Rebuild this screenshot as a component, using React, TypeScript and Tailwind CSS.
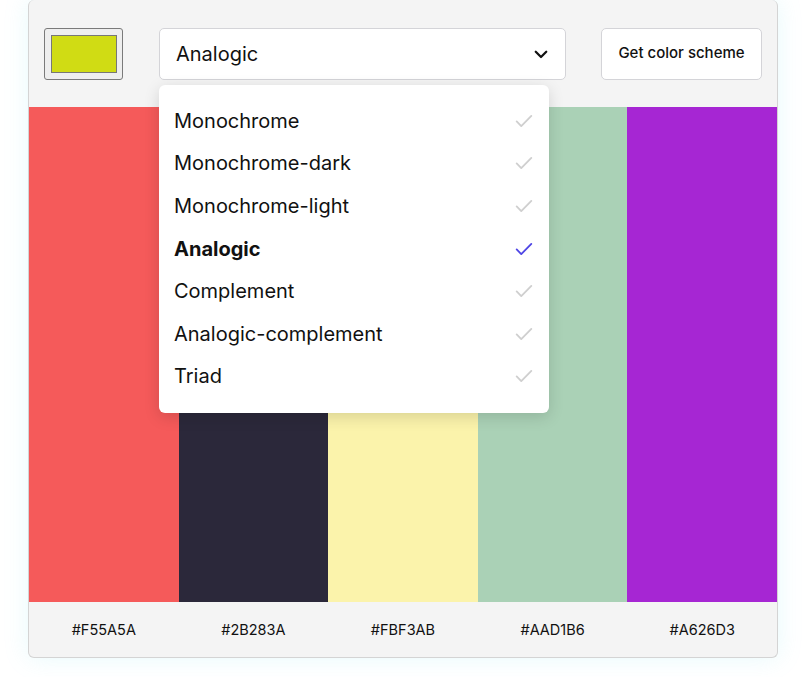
import React from "react";

const schemes = [
  "Monochrome",
  "Monochrome-dark",
  "Monochrome-light",
  "Analogic",
  "Complement",
  "Analogic-complement",
  "Triad",
];

const colors = [
  { hex: "#F55A5A", cls: "bg-[#F55A5A]" },
  { hex: "#2B283A", cls: "bg-[#2B283A]" },
  { hex: "#FBF3AB", cls: "bg-[#FBF3AB]" },
  { hex: "#AAD1B6", cls: "bg-[#AAD1B6]" },
  { hex: "#A626D3", cls: "bg-[#A626D3]" },
];

function Check({ active }: { active: boolean }) {
  return (
    <svg width="22" height="22" viewBox="0 0 24 24" fill="none" stroke={active ? "#4f46e5" : "#cfcfcf"} strokeWidth="2" strokeLinecap="round" strokeLinejoin="round">
      <path d="M4 12.5l5 5L20 6.5" />
    </svg>
  );
}

export default function App() {
  return (
    <div className="min-h-[677px] bg-white" style={{ fontFamily: "Inter, 'Noto Sans', sans-serif" }}>
      <div className="ml-[28px] w-[750px] h-[658px] rounded-md border border-[#d4d4d4] border-t-0 bg-[#f4f4f4] shadow-[0_0_24px_rgba(120,230,240,0.18)] flex flex-col relative">
        <div className="h-[107px] flex items-center pl-[15px] pr-[15px] shrink-0">
          <div className="w-[79px] h-[52px] border border-[#7a7a7a] rounded-[3px] bg-[#eeeeee] flex items-center justify-center">
            <div className="w-[66px] h-[38px] bg-[#d0dc14] border border-[#777]"></div>
          </div>
          <div className="relative ml-[36px]">
            <div className="w-[407px] h-[52px] bg-white border border-[#d4d4d8] rounded-[5px] flex items-center justify-between pl-[16px] pr-[15px]">
              <span className="text-[20px] text-[#111]">Analogic</span>
              <svg width="18" height="18" viewBox="0 0 24 24" fill="none" stroke="#111" strokeWidth="3" strokeLinecap="round" strokeLinejoin="round">
                <path d="M5 9l7 7 7-7" />
              </svg>
            </div>
            <div className="absolute left-0 top-[57px] w-[390px] bg-white rounded-[6px] shadow-[0_4px_16px_rgba(0,0,0,0.14)] pt-[15px] pb-[15px] z-10">
              {schemes.map((s) => (
                <div key={s} className="h-[42.6px] flex items-center justify-between pl-[15px] pr-[14px] pt-[0px]">
                  <span className={"text-[20px] text-[#111] " + (s === "Analogic" ? "font-bold" : "")}>{s}</span>
                  <Check active={s === "Analogic"} />
                </div>
              ))}
            </div>
          </div>
          <button className="ml-auto w-[161px] h-[52px] bg-white border border-[#d4d4d8] rounded-[5px] text-[15px] text-[#111] font-medium">
            Get color scheme
          </button>
        </div>
        <div className="flex-1 flex">
          {colors.map((c) => (
            <div key={c.hex} className={"flex-1 " + c.cls}></div>
          ))}
        </div>
        <div className="h-[55px] flex shrink-0">
          {colors.map((c) => (
            <div key={c.hex} className="flex-1 flex items-center justify-center text-[14.5px] text-[#111] pt-[1px]">
              {c.hex}
            </div>
          ))}
        </div>
      </div>
    </div>
  );
}
